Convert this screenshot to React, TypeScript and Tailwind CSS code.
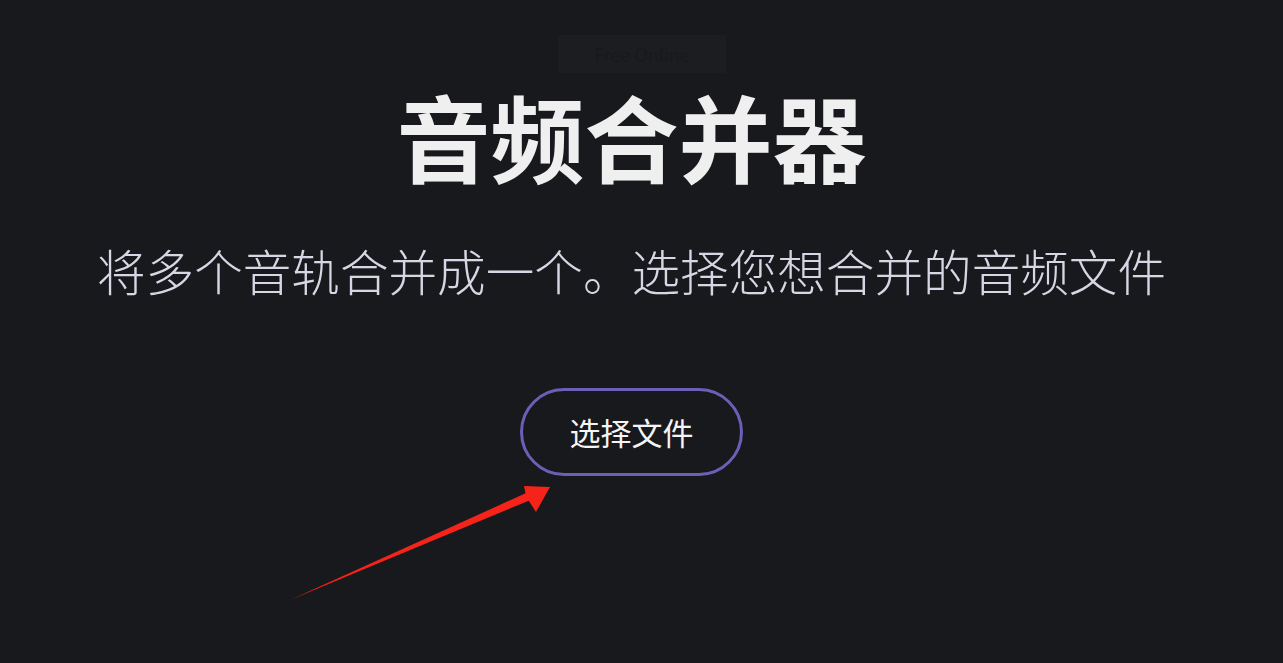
export default function App() {
  return (
    <div className="relative h-[663px] w-full overflow-hidden bg-[#18191d] font-['Noto_Sans_CJK_SC','Noto_Sans',sans-serif]">
      <div className="flex flex-col items-center pt-[35px] pr-[20px]">
        {/* faint badge, nearly invisible */}
        <div className="ml-[21px] flex h-[38px] w-[168px] items-center justify-center bg-[#1c1d20] text-[18px] leading-none text-[#18191c]">
          Free Online
        </div>

        <h1 className="mt-[15px] text-[94px] font-bold leading-none text-[#efefef]">
          音频合并器
        </h1>

        <p className="mt-[64px] text-[48.6px] font-light leading-none text-[#d6d6e4]">
          将多个音轨合并成一个。选择您想合并的音频文件
        </p>

        <button className="mt-[93px] flex h-[88px] w-[223px] items-center justify-center rounded-full border-[3px] border-[#6b5fb8] text-[31px] leading-none text-[#f4f4f4]">
          选择文件
        </button>
      </div>

      {/* annotation arrow */}
      <svg className="pointer-events-none absolute left-0 top-0" width="1283" height="663" viewBox="0 0 1283 663">
        <polygon
          points="290,600 525.5,493.3 524,486 550,487 536,512 528.7,500.7"
          fill="#f5231a"
        />
      </svg>
    </div>
  )
}
